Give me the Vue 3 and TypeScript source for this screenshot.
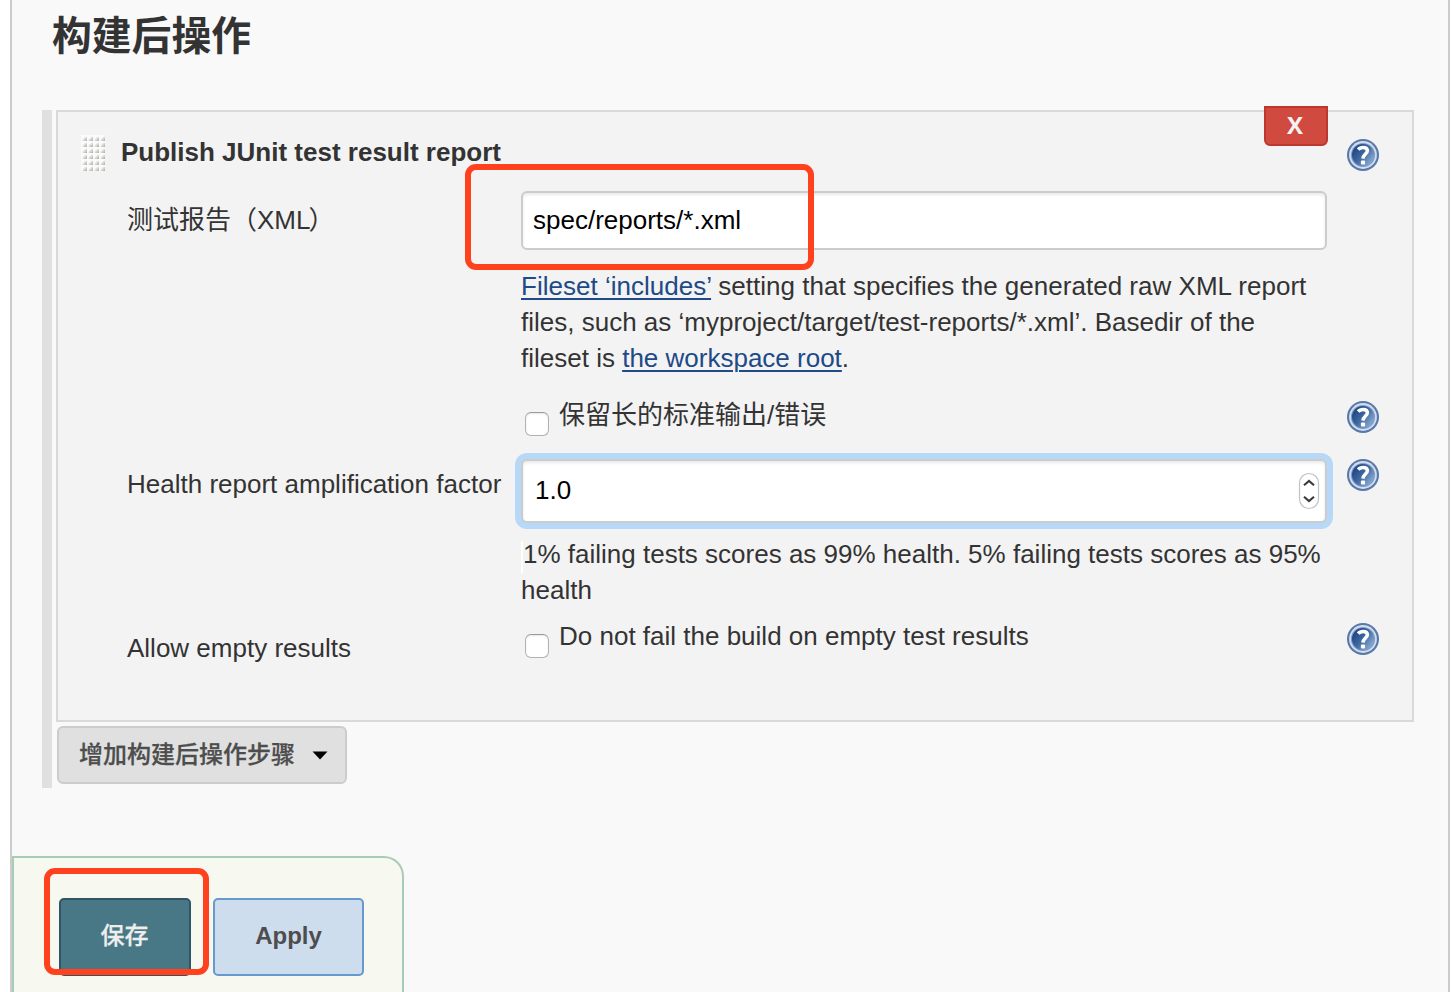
<script setup lang="ts">
import { ref } from 'vue'

const reportPattern = ref('spec/reports/*.xml')
const factor = ref('1.0')
const dots = Array.from({ length: 24 }, (_, i) => ({
  x: 1.5 + (i % 4) * 6,
  y: 1.7 + Math.floor(i / 4) * 6,
}))
</script>

<template>
  <div class="page">
    <svg class="defs" width="0" height="0" aria-hidden="true">
      <defs>
        <linearGradient id="disc" x1="0.05" y1="0.2" x2="0.95" y2="0.9">
          <stop offset="0" stop-color="#1d4380" />
          <stop offset="0.45" stop-color="#3f68a2" />
          <stop offset="1" stop-color="#93b4da" />
        </linearGradient>
        <linearGradient id="bead" x1="0" y1="0" x2="1" y2="1">
          <stop offset="0.25" stop-color="#f7f7f6" />
          <stop offset="1" stop-color="#a9a8a3" />
        </linearGradient>
        <symbol id="help" viewBox="0 0 32 32">
          <circle cx="16" cy="16" r="16" fill="#5678ab" />
          <circle cx="16" cy="16" r="13.9" fill="#d3deed" />
          <circle cx="16" cy="16" r="12.1" fill="#7f9cc6" />
          <circle cx="16" cy="16" r="11" fill="url(#disc)" />
          <path d="M11.2 10.6C12.5 8.9 14.2 8.4 16.1 8.4C18.9 8.4 20.4 9.8 20.4 11.8C20.4 15 16.2 15.2 16 19.6" fill="none" stroke="#fff" stroke-width="3.5" />
          <rect x="13.9" y="21.6" width="4.2" height="4" rx="1" fill="#fff" />
        </symbol>
      </defs>
    </svg>

    <main class="content">
      <h1 class="heading">构建后操作</h1>

      <section class="steps">
        <div class="panel">
          <button class="remove">X</button>

          <div class="title-row">
            <svg class="handle" width="24" height="36" viewBox="0 0 24 36">
              <rect width="24" height="36" fill="#fbfbfb" />
              <path v-for="(d, i) in dots" :key="i" :d="`M${d.x} ${d.y + 4.3}V${d.y + 2.2}L${d.x + 2.4} ${d.y}H${d.x + 4.5}V${d.y + 4.3}Z`" fill="url(#bead)" />
            </svg>
            <strong class="title">Publish JUnit test result report</strong>
            <svg class="help"><use href="#help" /></svg>
          </div>

          <div class="row pattern-row">
            <label class="label cjk">测试报告（XML<span class="paren">）</span></label>
            <div class="field">
              <input v-model="reportPattern" class="input" type="text" />
              <div class="marker marker-field"></div>
            </div>
          </div>

          <div class="row desc-row">
            <p class="desc">
              <span class="line first"><a class="link">Fileset ‘includes’</a> setting that specifies the generated raw XML report</span>
              <span class="line">files, such as ‘myproject/target/test-reports/*.xml’. Basedir of the</span>
              <span class="line">fileset is <a class="link">the workspace root</a>.</span>
            </p>
          </div>

          <div class="row keep-row">
            <label class="check"><i class="box"></i><span class="check-text">保留长的标准输出/错误</span></label>
            <svg class="help"><use href="#help" /></svg>
          </div>

          <div class="row factor-row">
            <label class="label factor-label">Health report amplification factor</label>
            <div class="field number">
              <input v-model="factor" class="input focused" type="text" />
              <svg class="spinner" width="22" height="38" viewBox="0 0 22 38">
                <rect x="1.5" y="1.5" width="19" height="35" rx="9.5" fill="#fff" stroke="#c2c2c2" stroke-width="1.2" />
                <path d="M6 13.3L11 9L16 13.3M6 24.7L11 29L16 24.7" fill="none" stroke="#3a3a3a" stroke-width="2.1" />
              </svg>
            </div>
            <svg class="help"><use href="#help" /></svg>
          </div>

          <div class="row score-row">
            <p class="desc">
              <span class="line"><i class="caret"></i>1% failing tests scores as 99% health. 5% failing tests scores as 95%</span>
              <span class="line">health</span>
            </p>
          </div>

          <div class="row empty-row">
            <label class="label empty-label">Allow empty results</label>
            <label class="check"><i class="box"></i><span class="check-text empty-text">Do not fail the build on empty test results</span></label>
            <svg class="help"><use href="#help" /></svg>
          </div>
        </div>

        <button class="add">
          <span class="add-text">增加构建后操作步骤</span>
          <svg width="16" height="9" viewBox="0 0 16 9"><path d="M0.5 0.5H15.5L8 8.5Z" fill="#000" /></svg>
        </button>
      </section>

      <footer class="actions">
        <button class="btn save">保存</button>
        <button class="btn apply">Apply</button>
        <div class="marker marker-save"></div>
      </footer>
    </main>
  </div>
</template>

<style>
body {
  margin: 0;
  background: #fff;
  overflow: hidden;
}
</style>

<style scoped>
.page,
.page * {
  box-sizing: border-box;
}
.page {
  width: 1452px;
  height: 992px;
  padding: 0 2px 0 10px;
  overflow: hidden;
  color: #333;
  font: 26px/36px "Liberation Sans", "Noto Sans CJK SC", sans-serif;
  white-space: nowrap;
}
.defs {
  position: absolute;
}
.content {
  display: flex;
  flex-direction: column;
  height: 992px;
  border: solid #ccc;
  border-width: 0 2px;
  background: #f9f9f9;
}
.heading {
  flex: none;
  height: 110px;
  margin: 0;
  padding: 6px 0 0 40px;
  font-size: 39.8px;
  line-height: 60px;
  font-weight: 700;
}
.steps {
  flex: none;
  width: 1372px;
  height: 678px;
  margin-left: 30px;
  padding-left: 4px;
  border-left: 10px solid #e0e0e0;
}
.panel {
  position: relative;
  width: 1358px;
  height: 612px;
  border: 2px solid #d9d9d9;
  background: #f3f3f3;
}
.remove {
  position: absolute;
  top: -6px;
  right: 84px;
  width: 64px;
  height: 40px;
  padding: 0 2px 2px 0;
  border: 2px solid #bd362f;
  border-radius: 0 0 6px 6px;
  background: #d14a3f;
  color: #f3f3f3;
  font: 700 24px/34px "Open Sans", sans-serif;
}
.title-row {
  display: flex;
  height: 79px;
  padding: 23px 33px 0 23px;
}
.title {
  margin: -1px auto 0 16px;
}
.help {
  flex: none;
  width: 32px;
  height: 32px;
}
.title-row .help {
  margin-top: 4px;
}
.row {
  display: grid;
  grid-template-columns: 394px 806px 32px;
  align-items: start;
  padding-left: 69px;
}
.row > .help {
  grid-column: 3;
  margin-left: 20px;
}
.label {
  grid-column: 1;
}
.cjk {
  padding-top: 11px;
}
.paren {
  margin-left: -2px;
}
.field {
  position: relative;
  grid-column: 2;
}
.pattern-row {
  height: 77px;
}
.input {
  display: block;
  width: 806px;
  height: 59px;
  padding: 0 10px;
  border: 2px solid #ccc;
  border-radius: 6px;
  outline: none;
  background: #fff;
  box-shadow: inset 0 2px 3px rgba(0, 0, 0, 0.09);
  color: #000;
  font: 26px/36px "Liberation Sans", sans-serif;
}
.desc {
  grid-column: 2;
  margin: 0;
}
.line {
  display: block;
}
.first {
  letter-spacing: 0.015px;
}
.desc-row {
  height: 133px;
}
.link {
  color: #204a87;
  text-decoration: underline;
  text-decoration-thickness: 2px;
  text-underline-offset: 3px;
}
.check {
  display: flex;
  grid-column: 2;
  padding-left: 4px;
}
.box {
  width: 24px;
  height: 24px;
  margin-top: 11px;
  border: 1.5px solid #b2b2b2;
  border-top-color: #999;
  border-radius: 6px;
  background: #fff;
  box-shadow: inset 0 1px 2px rgba(0, 0, 0, 0.1);
}
.check-text {
  margin: -4px 0 0 10px;
}
.check-text.empty-text {
  margin-top: -5px;
}
.keep-row {
  height: 58px;
}
.factor-row {
  height: 77px;
}
.factor-label {
  padding-top: 7px;
}
.input.focused {
  height: 64px;
  padding: 0 12px 2px;
  box-shadow: 0 0 0 6px #b8d8f7, inset 0 2px 3px rgba(0, 0, 0, 0.09);
}
.spinner {
  position: absolute;
  top: 13px;
  right: 7px;
}
.score-row {
  height: 87px;
}
.caret {
  display: inline-block;
  width: 2px;
  height: 32px;
  margin-bottom: -1px;
  vertical-align: -9px;
  background: #fff;
}
.empty-label {
  padding-top: 7px;
}
.add {
  display: flex;
  align-items: center;
  width: 290px;
  height: 58px;
  margin: 4px 0 0 1px;
  padding: 0 0 0 20px;
  border: 2px solid #ccc;
  border-radius: 6px;
  background: #e0e0e0;
  color: #4d4d4d;
  font: 500 24px/36px "Noto Sans CJK SC", sans-serif;
  gap: 17px;
}
.add-text {
  margin-top: -4px;
  -webkit-text-stroke: 0.25px #4d4d4d;
}
.actions {
  position: relative;
  display: flex;
  flex: none;
  gap: 22px;
  width: 392px;
  height: 136px;
  margin-top: 68px;
  padding: 40px 0 0 45px;
  border: 2px solid #a9cbb7;
  border-bottom: 0;
  border-radius: 0 20px 0 0;
  background: #f7f8f0;
}
.btn {
  height: 78px;
  padding: 0 0 2px;
  border: 2px solid #2f5567;
  border-radius: 5px;
  background: #487785;
  color: #eee;
  font: 700 24px/36px "Liberation Sans", "Noto Sans CJK SC", sans-serif;
}
.save {
  width: 132px;
  padding-right: 1px;
  font-weight: 500;
  -webkit-text-stroke: 0.25px #eee;
}
.apply {
  width: 151px;
  border-color: #6699cc;
  background: #cdddee;
  color: #4d4d4d;
}
.marker {
  position: absolute;
  border: 6px solid #ff421d;
  border-radius: 11px;
}
.marker-field {
  left: -56px;
  top: -27px;
  width: 349px;
  height: 106px;
}
.marker-save {
  left: 30px;
  top: 10px;
  width: 165px;
  height: 107px;
}
</style>
